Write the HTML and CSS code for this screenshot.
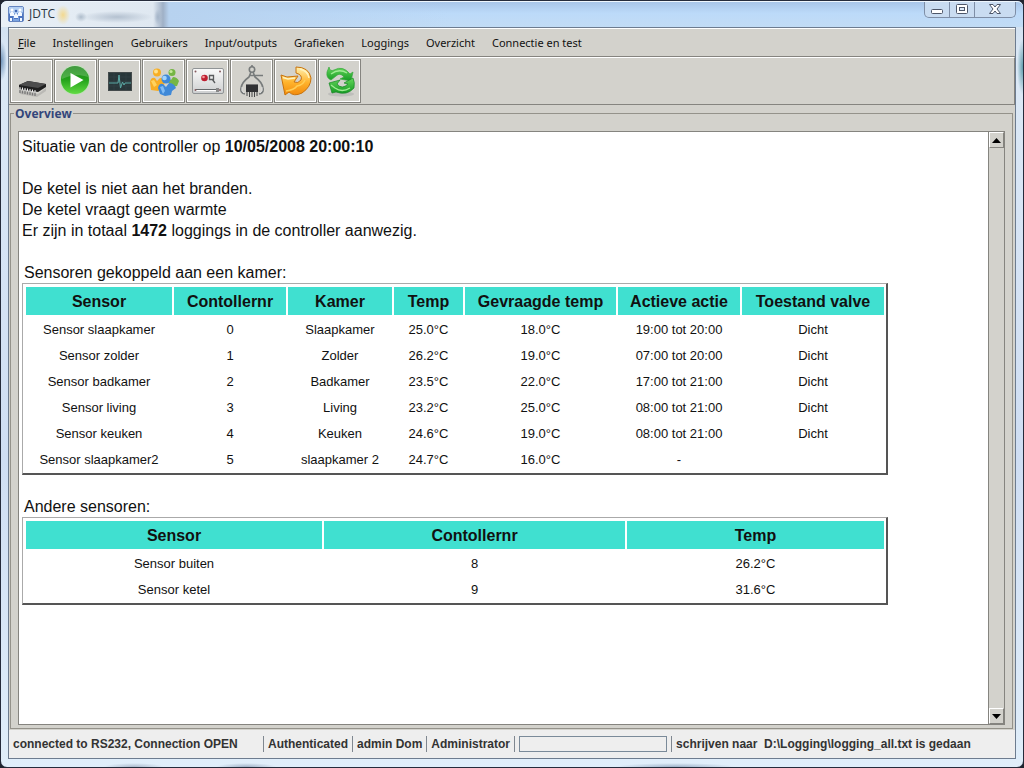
FILE: index.html
```html
<!DOCTYPE html>
<html lang="nl">
<head>
<meta charset="utf-8">
<title>JDTC</title>
<link rel="stylesheet" href="styles.css">
</head>
<body>
<div class="window">
  <header class="titlebar">
    <svg class="app-icon" width="16" height="16" viewBox="0 0 16 16" aria-hidden="true">
      <rect x=".5" y=".5" width="15" height="15" rx="1.5" fill="#7ba3e0" stroke="#6585c0"/>
      <path d="M1 1h14v5L1 9z" fill="#b4d0f3"/>
      <path d="M1 15V8l3-3 3 3 1 1 1-1 3-3 3 3v7h-4v-4l-1-1v3H6v-3l-1 1v4z" fill="#4c74c0"/>
      <path d="M2 7l2-2 2 2v3H2zM10 7l2-2 2 2v3h-4zM6 9l2-2 2 2v3H6zM2 12h2v3H2zM12 12h2v3h-2z" fill="#f2f8ff"/>
      <circle cx="4" cy="4" r="1.500" fill="#fff"/><circle cx="8" cy="5" r="1.300" fill="#3f66b4"/><circle cx="12" cy="4" r="1.500" fill="#fff"/>
    </svg>
    <h1 class="title">JDTC</h1>
    <div class="controls">
      <button class="control" aria-label="Minimaliseren"><svg width="14" height="16" viewBox="0 0 14 16"><rect x="1.500" y="8.500" width="11" height="4" rx="1" fill="#fff" stroke="#4d5668"/></svg></button>
      <button class="control" aria-label="Maximaliseren"><svg width="14" height="16" viewBox="0 0 14 16"><rect x="1.500" y="3.500" width="11" height="9" rx="1" fill="#fff" stroke="#4d5668"/><rect x="4.500" y="6.500" width="5" height="3" fill="#dce9f8" stroke="#4d5668"/></svg></button>
      <button class="control control-close" aria-label="Sluiten"><svg width="14" height="16" viewBox="0 0 14 16"><path d="M1.500 3.500h3.500l2 2.500 2-2.500h3.500L9 8l3.500 4.500H9L7 10l-2 2.500H1.500L5 8z" fill="#fff" stroke="#4d5668"/></svg></button>
    </div>
  </header>

  <div class="client">
    <nav class="menubar">
      <button class="menu"><u>F</u>ile</button>
      <button class="menu">Instellingen</button>
      <button class="menu">Gebruikers</button>
      <button class="menu">Input/outputs</button>
      <button class="menu">Grafieken</button>
      <button class="menu">Loggings</button>
      <button class="menu">Overzicht</button>
      <button class="menu">Connectie en test</button>
    </nav>

    <div class="toolbar">
      <button class="tool" aria-label="Controller">
        <svg width="36" height="36" viewBox="0 0 36 36">
          <path d="M5 28l19 3 8-6v3l-9 6-17-3z" fill="#aaa9a5" opacity=".6"/>
          <path d="M5 22l9-4 18 3v3l-8 5-19-3z" fill="#202020"/>
          <path d="M5 22l9-4 18 3-8 4z" fill="#4d4d4d"/>
          <path d="M6 25v5m2.500-4.500v5m2.500-4.500v5m2.500-4.500v5m2.500-4.500v5m2.500-4.500v5m2.500-4.500v5" stroke="#777" stroke-width="1.300"/>
          <path d="M6 24v3m2.500-2.500v3m2.500-2.500v3m2.500-2.500v3m2.500-2.500v3m2.500-2.500v3m2.500-2.500v3" stroke="#eee"/>
        </svg>
      </button>
      <button class="tool" aria-label="Start">
        <svg width="36" height="36" viewBox="0 0 36 36">
          <defs><linearGradient id="g-play" x2="0" y2="1"><stop stop-color="#128010"/><stop offset=".5" stop-color="#25a31c"/><stop offset="1" stop-color="#62db43"/></linearGradient></defs>
          <circle cx="17" cy="17" r="15" fill="#bfe0b8"/><circle cx="17" cy="17" r="14" fill="url(#g-play)"/>
          <path d="M4 16a13 13 0 0 1 26-2c-9-3-18-2-26 2z" fill="#fff" opacity=".2"/>
          <path d="M12.500 10l13 7-13 7.500z" fill="#fff"/>
        </svg>
      </button>
      <button class="tool" aria-label="Monitor">
        <svg width="36" height="36" viewBox="0 0 36 36">
          <rect x="6.500" y="9.500" width="23" height="18" fill="#29373a" stroke="#434a4b"/>
          <path d="M7 14h22M7 18.500h22M7 23h22M12 10v17M18 10v17M24 10v17" stroke="#303f42"/>
          <path d="M7 20h9l1-8 1.500 13 2-6 1.500 3 1-2H29" fill="none" stroke="#5ba9a5"/>
        </svg>
      </button>
      <button class="tool" aria-label="Gebruikers">
        <svg width="36" height="36" viewBox="0 0 36 36">
          <g fill="#f8ae25"><circle cx="11" cy="9.500" r="4"/><path d="M4 19q1-5 5-4l2 3 3-3q4 0 5 4l-2 6-5 3-7-1z"/></g>
          <circle cx="10" cy="8.500" r="2" fill="#ffe28d"/><path d="M5 18l3-1 3 5-3 2z" fill="#ffd35e"/>
          <g fill="#75b645"><circle cx="26" cy="9.500" r="3.500"/><path d="M22 15l3 2 2-3q4 0 6 4l-2 5-7 1z"/></g><circle cx="25" cy="8.500" r="1.600" fill="#c6e89c"/>
          <g fill="#3f89d8"><circle cx="20" cy="16" r="4.500"/><path d="M12 25q1-5 5-4l3 3 3-4q5 0 7 5l-4 3-1 4-6 1-5-2-1-3z"/></g>
          <circle cx="18.500" cy="15" r="2.300" fill="#a3d3fc"/><path d="M14 24l3-1 2 5-2 3z" fill="#80bcf5"/>
        </svg>
      </button>
      <button class="tool" aria-label="Schakelpaneel">
        <svg width="36" height="36" viewBox="0 0 36 36">
          <defs><linearGradient id="g-panel" x2="0" y2="1"><stop stop-color="#fafafa"/><stop offset="1" stop-color="#cdcfd0"/></linearGradient></defs>
          <rect x="2.500" y="5.500" width="31" height="25" rx="1.500" fill="url(#g-panel)" stroke="#909496"/>
          <circle cx="14.500" cy="15" r="3.300" fill="#be1f31"/><circle cx="13.500" cy="14" r="1.300" fill="#f5989a"/>
          <path d="M19.500 12.500h4v4h-4zM22 16l3 4" fill="#eee" stroke="#595b5d" stroke-width="1.300"/>
          <path d="M6 26.500h23" stroke="#64686a"/><path d="M6 27.500h23" stroke="#fff"/><path d="M26 25h3v4h-3z" fill="#888"/>
          <g fill="#85595d"><circle cx="5.500" cy="8.500" r="1"/><circle cx="30" cy="8.500" r="1"/><circle cx="5.500" cy="27" r="1"/><circle cx="30" cy="27" r="1"/></g>
        </svg>
      </button>
      <button class="tool" aria-label="Chip meten">
        <svg width="36" height="36" viewBox="0 0 36 36">
          <g fill="none" stroke="#777b7b" stroke-width="1.600"><circle cx="18" cy="6.500" r="2.700"/><path d="M18 2v2M17 9l-2 5q-7 5-8 11-1 5 4 6M19 9l2 5q7 5 8 11 1 5-4 6M15 12.500h14"/></g>
          <path d="M8 24q-1 4 2 6M28 24q1 4-2 6" fill="none" stroke="#ddd"/>
          <rect x="12" y="22" width="12" height="7" fill="#303133"/><path d="M12 21.500h12" stroke="#767676"/>
          <path d="M13 29v4m2.500-4v5m2.500-5v5m2.500-5v5m2.500-5v4" stroke="#444"/>
        </svg>
      </button>
      <button class="tool" aria-label="Herhalen">
        <svg width="36" height="36" viewBox="0 0 36 36">
          <defs><linearGradient id="g-turn" x2="0" y2="1"><stop stop-color="#fff0b0"/><stop offset=".55" stop-color="#ffb32c"/><stop offset="1" stop-color="#f28a0b"/></linearGradient></defs>
          <path d="M18 4Q31 4 33 15q0 9-9 15-8 4-13-1l-4 3L3 12l6 2 11-1-4 6q4 2 7-2 2-5-5-7z" fill="url(#g-turn)" stroke="#c8730d" stroke-linejoin="round"/>
          <path d="M5 14.500l5 1.500 7-1M22 6q8 2 9 9" fill="none" stroke="#fff3bd" stroke-width="1.500"/>
          <path d="M8 28q8-1 11-5 6-1 8-6" fill="none" stroke="#ffce57" stroke-width="1.500"/>
        </svg>
      </button>
      <button class="tool" aria-label="Vernieuwen">
        <svg width="36" height="36" viewBox="0 0 36 36">
          <defs><linearGradient id="g-ref" x2="0" y2="1"><stop stop-color="#65d75b"/><stop offset="1" stop-color="#159a23"/></linearGradient></defs>
          <ellipse cx="19" cy="31" rx="13" ry="2.500" fill="#aaa" opacity=".5"/>
          <path d="M7 4q1 5 5 3 9-5 16 4l3-2-2 9-11-2 4-2q-4-5-8-1l-5 4q-5-2-4-8z" fill="url(#g-ref)" stroke="#3aa73e" stroke-width=".7"/>
          <path d="M7 20l11-3-3 4q5 6 11 0l-4-1 9-5q2 4 1 10-7 8-18 4l-4 1z" fill="url(#g-ref)" stroke="#198526" stroke-width=".7"/>
          <path d="M9 11q8-6 16-1M9 22l4 3q7 5 15 0" fill="none" stroke="#a0ec94" stroke-width="1.300"/>
        </svg>
      </button>
    </div>

    <section class="overview" aria-labelledby="overview-title">
      <h2 class="overview-title" id="overview-title">Overview</h2>
      <div class="scrollpane">
        <main class="report">
          <p>Situatie van de controller op <b>10/05/2008 20:00:10</b></p>
          <p class="block">De ketel is niet aan het branden.<br>De ketel vraagt geen warmte<br>Er zijn in totaal <b>1472</b> loggings in de controller aanwezig.</p>
          <table class="sensors">
            <caption>Sensoren gekoppeld aan een kamer:</caption>
            <colgroup><col class="c-sensor"><col class="c-number"><col class="c-room"><col class="c-temp"><col class="c-target"><col class="c-action"><col class="c-valve"></colgroup>
            <thead><tr><th>Sensor</th><th>Contollernr</th><th>Kamer</th><th>Temp</th><th>Gevraagde temp</th><th>Actieve actie</th><th>Toestand valve</th></tr></thead>
            <tbody>
              <tr><td>Sensor slaapkamer</td><td>0</td><td>Slaapkamer</td><td>25.0°C</td><td>18.0°C</td><td>19:00 tot 20:00</td><td>Dicht</td></tr>
              <tr><td>Sensor zolder</td><td>1</td><td>Zolder</td><td>26.2°C</td><td>19.0°C</td><td>07:00 tot 20:00</td><td>Dicht</td></tr>
              <tr><td>Sensor badkamer</td><td>2</td><td>Badkamer</td><td>23.5°C</td><td>22.0°C</td><td>17:00 tot 21:00</td><td>Dicht</td></tr>
              <tr><td>Sensor living</td><td>3</td><td>Living</td><td>23.2°C</td><td>25.0°C</td><td>08:00 tot 21:00</td><td>Dicht</td></tr>
              <tr><td>Sensor keuken</td><td>4</td><td>Keuken</td><td>24.6°C</td><td>19.0°C</td><td>08:00 tot 21:00</td><td>Dicht</td></tr>
              <tr><td>Sensor slaapkamer2</td><td>5</td><td>slaapkamer 2</td><td>24.7°C</td><td>16.0°C</td><td>-</td><td></td></tr>
            </tbody>
          </table>
          <table class="sensors">
            <caption>Andere sensoren:</caption>
            <colgroup><col class="c-other-sensor"><col class="c-other-number"><col class="c-other-temp"></colgroup>
            <thead><tr><th>Sensor</th><th>Contollernr</th><th>Temp</th></tr></thead>
            <tbody>
              <tr><td>Sensor buiten</td><td>8</td><td>26.2°C</td></tr>
              <tr><td>Sensor ketel</td><td>9</td><td>31.6°C</td></tr>
            </tbody>
          </table>
        </main>
        <div class="scrollbar">
          <button class="arrow" aria-label="Omhoog"><svg width="9" height="5" viewBox="0 0 9 5"><path d="M0 5l4.500-5L9 5z"/></svg></button>
          <button class="arrow" aria-label="Omlaag"><svg width="9" height="5" viewBox="0 0 9 5"><path d="M0 0l4.500 5L9 0z"/></svg></button>
        </div>
      </div>
    </section>

    <footer class="statusbar">
      <span class="status status-connection">connected to RS232, Connection OPEN</span>
      <span class="status">Authenticated</span>
      <span class="status">admin Dom</span>
      <span class="status">Administrator</span>
      <span class="status"><progress class="progress" value="0" max="100" aria-label="Voortgang"></progress></span>
      <span class="status status-message">schrijven naar&nbsp; D:\Logging\logging_all.txt is gedaan</span>
    </footer>
  </div>
</div>
</body>
</html>
```
FILE: styles.css
```css
* { box-sizing: border-box; }

body {
  margin: 0;
  background: #20242f;
}

button {
  margin: 0;
  padding: 0;
  border: 0;
  background: none;
  font: inherit;
  color: inherit;
}

.window {
  display: flex;
  flex-direction: column;
  min-height: 100vh;
  padding: 0 7px 8px;
  border: 1px solid #252b3b;
  border-radius: 7px;
  background:
    radial-gradient(6px 28px at 100% 66px, #5f9dac, transparent),
    radial-gradient(6px 20px at 0 60px, #6f93b8, transparent),
    radial-gradient(30px 4px at 13% 100%, #aab9cb, transparent),
    radial-gradient(30px 4px at 24% 100%, #9fb1c6, transparent),
    radial-gradient(60px 4px at 66% 100%, #9db2c8, transparent),
    linear-gradient(#cbdcee, #dce9f6 8%, #cfdef3 60%, #e0eefa);
}

/* Title bar */
.titlebar {
  display: flex;
  align-items: flex-start;
  height: 26px;
  margin: 0 -7px;
  padding: 0 7px;
  border-top: 1px solid #eef6fd;
  border-radius: 6px 6px 0 0;
  background:
    radial-gradient(7px 10px at 62px 13px, #f3d98f, transparent),
    radial-gradient(6px 5px at 80px 15px, #aebccb, transparent),
    radial-gradient(36px 6px at 116px 15px, #b4c1d0, transparent),
    radial-gradient(4px 8px at 157px 15px, #a3b4c8, transparent),
    linear-gradient(90deg, #e8eff6 0, #dfe8f1 152px, #9fb0c6 162px, #b7d2ef 168px, #b7d2ef88 300px, transparent 450px),
    linear-gradient(#a8c5e8, #bcdaf9 45%, #c2dcf5);
}

.app-icon { margin: 4px 5px 0 0; }

.title {
  flex: 1;
  margin: 3px 0 0;
  font: 12px/18px "Open Sans", "Noto Sans", sans-serif;
  color: #2a3440;
}

.controls {
  display: flex;
  height: 16px;
  border: 1px solid #7e8ea6;
  border-top: 0;
  border-radius: 0 0 5px 5px;
  background: #c9dcf1;
}

.control {
  display: flex;
  justify-content: center;
  width: 25px;
  height: 15px;
  border-right: 1px solid #7e8ea6;
}

.control svg { margin-top: -1px; }

.control-close {
  width: 40px;
  border-right: 0;
}

/* Client area */
.client {
  flex: 1;
  display: flex;
  flex-direction: column;
  border: 1px solid #6d7c8f;
  background: #d3d2cc;
}

.menubar {
  display: flex;
  gap: 17px;
  height: 29px;
  padding: 0 9px;
  border-top: 1px solid #fff;
  border-bottom: 1px solid #85847f;
  font: 11px/28px "Noto Sans", sans-serif;
  color: #111;
}

.toolbar {
  display: flex;
  gap: 1px;
  height: 48px;
  padding: 1px;
  border: 1px solid #85847f;
  border-top-color: #fff;
  border-left: 0;
}

.tool {
  display: flex;
  align-items: center;
  justify-content: center;
  width: 43px;
  height: 44px;
  border: 1px solid #85847f;
  box-shadow: inset 0 0 0 1px #fff;
}

/* Overview */
.overview {
  flex: 1;
  display: flex;
  flex-direction: column;
  margin: 8px 2px 1px 1px;
  padding: 0 7px 3px;
  border: 1px solid #94928a;
}

.overview-title {
  align-self: flex-start;
  margin: -8px 0 9px -4px;
  padding: 0 1px;
  background: #d3d2cc;
  font: bold 12px/16px "Open Sans", "Noto Sans", sans-serif;
  color: #33467a;
}

.scrollpane {
  flex: 1;
  display: flex;
  border: 1px solid #85847f;
  background: #fff;
}

.report {
  flex: 1;
  padding: 4px 4px 4px 3px;
  font: 16px/21px "Liberation Sans", Arial, sans-serif;
  color: #111;
}

.report p { margin: 0; }

.report .block { margin: 21px 0; }

.sensors {
  width: 90%;
  margin-bottom: 21px;
  padding: 1px 0 0 1px;
  table-layout: fixed;
  border: 2px solid #555;
  border-width: 1px 2px 2px 1px;
  border-top-color: #aaa;
  border-left-color: #aaa;
  border-spacing: 2px;
  text-align: center;
}

.sensors caption {
  padding-left: 2px;
  text-align: left;
}

.sensors th {
  height: 28px;
  padding: 0;
  background: #40e0d0;
  font-size: 16px;
}

.sensors td {
  height: 24px;
  padding: 0;
  font-size: 13px;
}

.c-sensor { width: 146px; }
.c-number { width: 112px; }
.c-room { width: 104px; }
.c-temp { width: 69px; }
.c-target { width: 151px; }
.c-action { width: 122px; }
.c-valve { width: 142px; }
.c-other-sensor { width: 296px; }
.c-other-number { width: 301px; }
.c-other-temp { width: 257px; }

.scrollbar {
  display: flex;
  flex-direction: column;
  justify-content: space-between;
  width: 16px;
  border-left: 1px solid #85847f;
  background: #d3d2cc;
}

.arrow {
  display: flex;
  align-items: center;
  justify-content: center;
  height: 16px;
  border: 1px solid;
  border-color: #fff #85847f #85847f #fff;
}

/* Status bar */
.statusbar {
  display: flex;
  align-items: center;
  height: 28px;
  padding-left: 4px;
  background: #eee;
  font: bold 12px/16px "Liberation Sans", Arial, sans-serif;
  color: #333;
}

.status {
  display: flex;
  align-items: center;
  height: 16px;
  padding: 0 4px;
  border-left: 1px solid #7f8790;
  white-space: pre;
}

.status-connection {
  width: 250px;
  padding: 0;
  border: 0;
}

.status-message { flex: 1; }

.progress {
  appearance: none;
  width: 148px;
  height: 16px;
  border: 1px solid #7a8a99;
  background: #eee;
}

.progress::-webkit-progress-bar { background: #eee; }
```
